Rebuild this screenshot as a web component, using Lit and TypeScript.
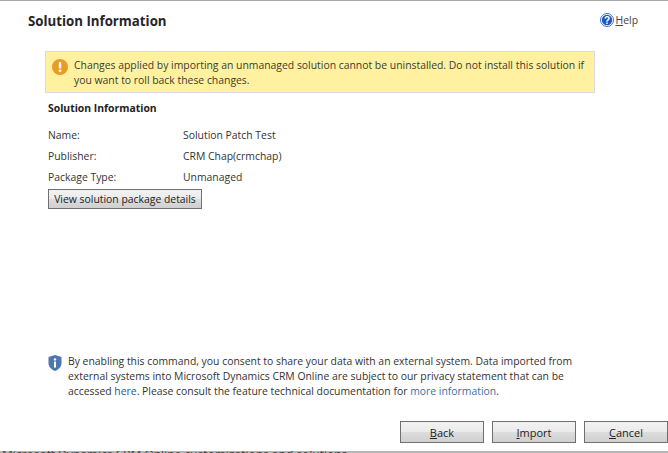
import { LitElement, html, css } from "lit";
import { customElement } from "lit/decorators.js";

@customElement("app-root")
export class AppRoot extends LitElement {
  static styles = css`
    :host {
      display: flex;
      flex-direction: column;
      width: 668px;
      height: 453px;
      overflow: hidden;
      background: #fff;
      font-family: "Open Sans", "Noto Sans", sans-serif;
      font-size: 10.4px;
      color: #333;
      box-sizing: border-box;
      border-top: 1px solid #a9a9a9;
    }
    .head {
      display: flex;
      justify-content: space-between;
      height: 50px;
      padding: 11px 30px 0 28px;
      box-sizing: border-box;
    }
    h1 {
      margin: 0;
      font-size: 13.25px;
      line-height: 18px;
      font-weight: 700;
      color: #262626;
    }
    .help {
      display: flex;
      align-items: flex-start;
      gap: 2px;
      margin-top: 1px;
      line-height: 14px;
      color: #444;
    }
    .help svg { margin-left: -2px; }
    .help u, .btn u { text-underline-offset: 1px; }
    .warn {
      display: flex;
      gap: 6px;
      margin-left: 45px;
      width: 550px;
      height: 42px;
      box-sizing: border-box;
      padding: 6px 0 0 6px;
      background: #fff19f;
      border: 1px solid #d8dce3;
      line-height: 15px;
      color: #3c3c32;
    }
    .warn svg { flex: none; margin-top: 1px; }
    .warn div { width: 518px; }
    .section {
      margin: 8px 0 0 48px;
      flex: 1;
    }
    h2 {
      margin: 0 0 13px;
      font-size: 10.4px;
      line-height: 14px;
      font-weight: 700;
      color: #222;
    }
    .rows {
      display: grid;
      grid-template-columns: 135px 1fr;
      row-gap: 7px;
      line-height: 14px;
    }
    .btn {
      display: block;
      padding: 0;
      box-sizing: border-box;
      border: 1px solid #707070;
      background: linear-gradient(#f2f2f2 0%, #ebebeb 48%, #dddddd 52%, #cfcfcf 100%);
      font: inherit;
      color: #222;
      height: 20px;
      line-height: 17px;
      text-align: center;
    }
    .view { width: 154px; margin-top: 5px; }
    .note {
      display: flex;
      gap: 6px;
      margin-left: 48px;
      width: 545px;
      height: 67px;
      line-height: 15px;
    }
    .note svg { flex: none; margin-top: 1px; }
    .note div { width: 506px; }
    .note a { color: #2b579a; text-decoration: none; }
    .note a.more { color: #3b6ea5; }
    .foot {
      display: flex;
      justify-content: flex-end;
      gap: 8px;
      height: 30px;
      box-sizing: border-box;
    }
    .foot .btn { width: 84px; height: 22px; line-height: 19px; font-size: 11px; }
    .strip {
      height: 2px;
      overflow: hidden;
      background: #b5b5b5;
      line-height: 8px;
      font-size: 12px;
      white-space: nowrap;
      padding-left: 2px;
      color: #444;
    }
  `;

  render() {
    return html`
      <div class="head">
        <h1>Solution Information</h1>
        <div class="help">
          <svg width="14" height="14" viewBox="0 0 14 14">
            <circle cx="7" cy="7" r="6.5" fill="#fff" stroke="#3f73c9"/>
            <circle cx="7" cy="7" r="5.2" fill="#1f57c3"/>
            <text x="7" y="10.5" text-anchor="middle" font-size="10" font-weight="700" fill="#fff" font-family="Liberation Sans">?</text>
          </svg>
          <span><u>H</u>elp</span>
        </div>
      </div>
      <div class="warn">
        <svg width="16" height="16" viewBox="0 0 16 16">
          <circle cx="8" cy="8" r="8" fill="#e99b27"/>
          <rect x="6.8" y="3" width="2.4" height="6.6" rx="1" fill="#fff"/>
          <circle cx="8" cy="11.8" r="1.4" fill="#fff"/>
        </svg>
        <div>Changes applied by importing an unmanaged solution cannot be uninstalled. Do not install this solution if you want to roll back these changes.</div>
      </div>
      <div class="section">
        <h2>Solution Information</h2>
        <div class="rows">
          <span>Name:</span><span>Solution Patch Test</span>
          <span>Publisher:</span><span>CRM Chap(crmchap)</span>
          <span>Package Type:</span><span>Unmanaged</span>
        </div>
        <button class="btn view">View solution package details</button>
      </div>
      <div class="note">
        <svg width="14" height="16" viewBox="0 0 14 16">
          <path d="M7 0 L13.5 2 V8 C13.5 12 10.5 14.5 7 16 C3.5 14.5 .5 12 .5 8 V2 Z" fill="#4f77ad"/>
          <circle cx="7" cy="4.4" r="1.2" fill="#fff"/>
          <rect x="6" y="6.6" width="2" height="6" fill="#fff"/>
        </svg>
        <div>By enabling this command, you consent to share your data with an external system. Data imported from external systems into Microsoft Dynamics CRM Online are subject to our privacy statement that can be accessed <a href="#">here</a>. Please consult the feature technical documentation for <a class="more" href="#">more information</a>.</div>
      </div>
      <div class="foot">
        <button class="btn"><u>B</u>ack</button>
        <button class="btn"><u>I</u>mport</button>
        <button class="btn"><u>C</u>ancel</button>
      </div>
      <div class="strip">Microsoft Dynamics CRM Online customizations and solutions</div>
    `;
  }
}
